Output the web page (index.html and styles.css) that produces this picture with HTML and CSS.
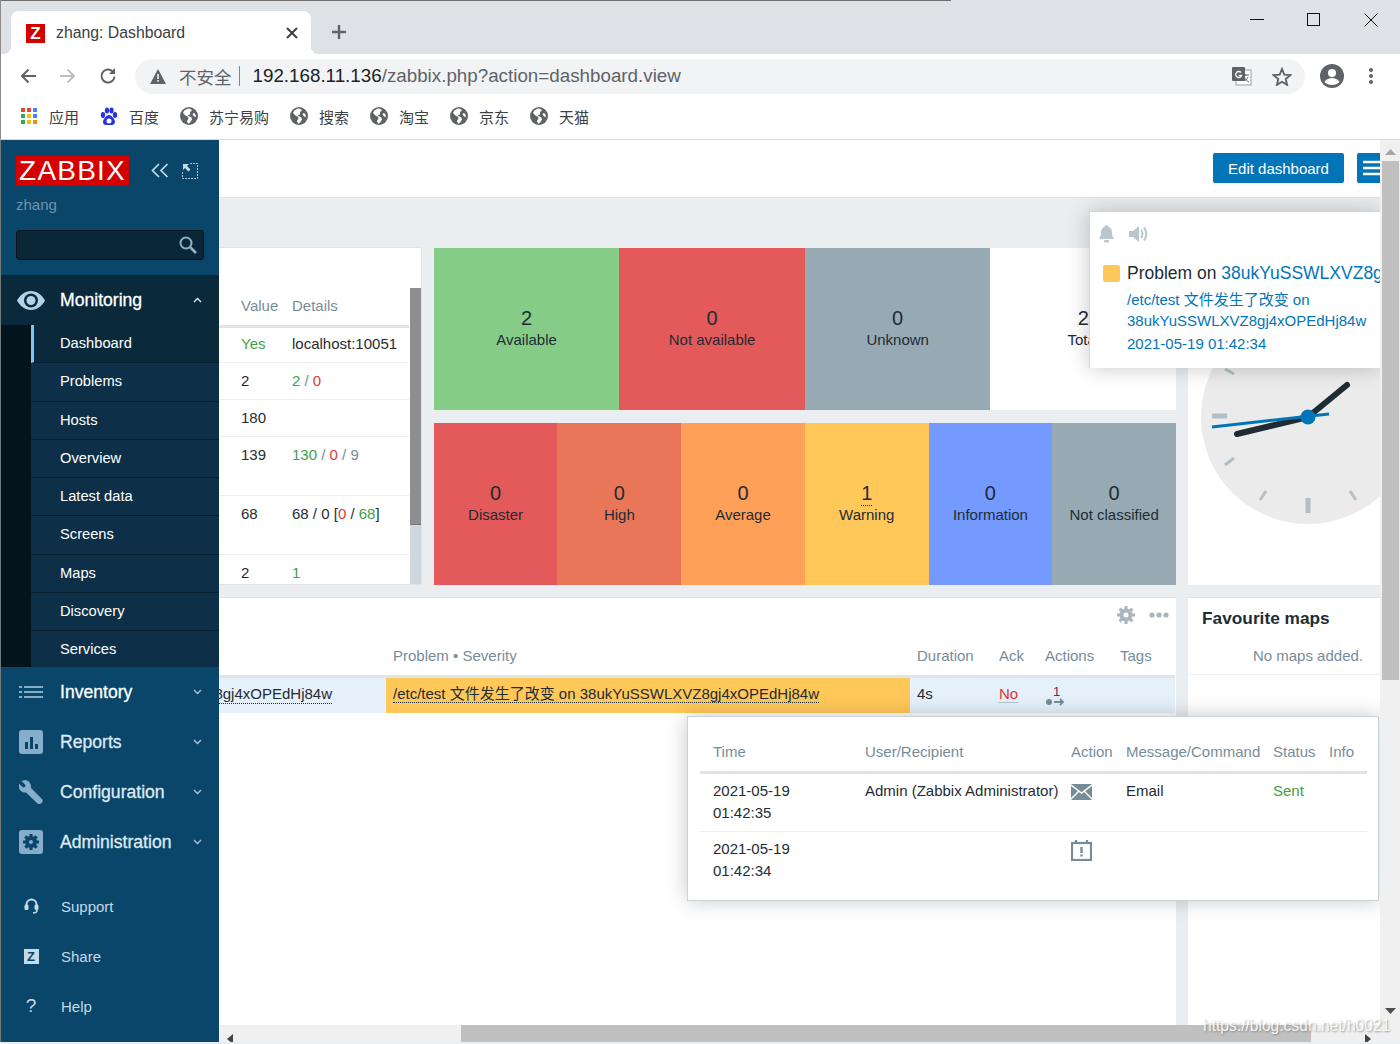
FILE: index.html
```html
<!DOCTYPE html>
<html lang="en">
  <head>
    <meta charset="UTF-8" />
    <meta name="viewport" content="width=device-width, initial-scale=1.0" />
    <title>zhang: Dashboard</title>
    <link rel="stylesheet" href="styles.css">
  </head>
  <body>
    <div class="frame">
      <!-- browser chrome -->
      <div class="tabstrip">
        <div class="tab">
          <span class="favicon">Z</span>
          <span class="tab-title">zhang: Dashboard</span>
          <svg class="tab-close" width="12" height="12" viewBox="0 0 12 12"><path d="M1 1l10 10M11 1L1 11" stroke="#3c4043" stroke-width="2"/></svg>
        </div>
        <svg class="tab-new" width="16" height="16" viewBox="0 0 16 16"><path d="M8 1v14M1 8h14" stroke="#5f6368" stroke-width="2.4"/></svg>
        <div class="win-controls">
          <svg width="14" height="14" viewBox="0 0 14 14"><path d="M0 6.500h14" stroke="#111" stroke-width="1"/></svg>
          <svg width="14" height="14" viewBox="0 0 14 14"><rect x=".5" y=".5" width="12" height="12" fill="none" stroke="#111"/></svg>
          <svg width="14" height="14" viewBox="0 0 14 14"><path d="M.5.5l13 13M13.500.5l-13 13" stroke="#111" stroke-width="1"/></svg>
        </div>
      </div>
      <div class="toolbar">
        <svg class="nav-icon" width="18" height="18" viewBox="0 0 18 18"><path d="M17 9H3M9.500 2.500L3 9l6.500 6.500" fill="none" stroke="#5f6368" stroke-width="2"/></svg>
        <svg class="nav-icon" width="18" height="18" viewBox="0 0 18 18"><path d="M1 9h14M8.500 2.500L15 9l-6.500 6.500" fill="none" stroke="#bcc0c4" stroke-width="2"/></svg>
        <svg class="nav-icon" width="18" height="18" viewBox="0 0 18 18"><path d="M15.500 9.500a6.500 6.500 0 1 1-2-5.200" fill="none" stroke="#5f6368" stroke-width="2"/><path d="M16 1v6h-6z" fill="#5f6368"/></svg>
        <div class="omnibox">
          <svg width="16" height="15" viewBox="0 0 16 15"><path d="M8 0l8 15H0z" fill="#5f6368"/><path d="M7.200 5h1.600v5H7.200zM7.200 11h1.600v1.800H7.200z" fill="#f1f3f4"/></svg>
          <span class="insecure">不安全</span>
          <span class="url-sep"></span>
          <span class="url"><span class="url-host">192.168.11.136</span>/zabbix.php?action=dashboard.view</span>
          <svg class="translate" width="20" height="20" viewBox="0 0 20 20"><rect x="4" y="4" width="15" height="15" fill="#fff" stroke="#9aa0a6"/><rect x="0" y="1" width="13" height="14" rx="1" fill="#5f6368"/><path d="M9 6.500a3 3 0 1 0 .6 3H6.800" fill="none" stroke="#fff" stroke-width="1.300"/><path d="M11 9h6M14 8v2M12 11c2 3 3 4 5 5M16 11c-1 2-2 3-3 4" fill="none" stroke="#5f6368"/></svg>
          <svg class="star" width="20" height="19" viewBox="0 0 20 19"><path d="M10 2l2.300 5.600 6 .5-4.600 3.900 1.400 5.900L10 14.800 4.900 17.900l1.400-5.900L1.700 8.100l6-.5z" fill="none" stroke="#5f6368" stroke-width="1.900"/></svg>
        </div>
        <svg class="avatar" width="24" height="24" viewBox="0 0 24 24"><circle cx="12" cy="12" r="12" fill="#5f6368"/><circle cx="12" cy="9" r="4" fill="#fff"/><path d="M4.500 18c1.500-3 5-4 7.500-4s6 1 7.500 4c-2 2-4.500 3-7.500 3s-5.500-1-7.500-3z" fill="#fff"/></svg>
        <svg class="kebab" width="4" height="18" viewBox="0 0 4 18"><circle cx="2" cy="3" r="2" fill="#5f6368"/><circle cx="2" cy="9" r="2" fill="#5f6368"/><circle cx="2" cy="15" r="2" fill="#5f6368"/></svg>
      </div>
      <div class="bookmarks">
        <div class="bookmark">
          <svg width="18" height="18" viewBox="0 0 18 18">
            <rect x="1" y="1" width="4" height="4" fill="#ea4335"/><rect x="7" y="1" width="4" height="4" fill="#ea4335"/><rect x="13" y="1" width="4" height="4" fill="#4285f4"/>
            <rect x="1" y="7" width="4" height="4" fill="#34a853"/><rect x="7" y="7" width="4" height="4" fill="#fbbc05"/><rect x="13" y="7" width="4" height="4" fill="#4285f4"/>
            <rect x="1" y="13" width="4" height="4" fill="#34a853"/><rect x="7" y="13" width="4" height="4" fill="#fbbc05"/><rect x="13" y="13" width="4" height="4" fill="#fb8c00"/>
          </svg>
          <span>应用</span>
        </div>
        <div class="bookmark">
          <svg width="18" height="18" viewBox="0 0 18 18" fill="#2932e1"><ellipse cx="3" cy="8" rx="2.200" ry="3"/><ellipse cx="7" cy="3.500" rx="2.100" ry="3"/><ellipse cx="11.500" cy="3.500" rx="2.100" ry="3"/><ellipse cx="15" cy="8" rx="2.200" ry="3"/><path d="M9 8c3 0 6 5 6 7s-2 3-3 3H6c-2 0-3-1-3-3s3-7 6-7z"/><circle cx="9" cy="14" r="2.500" fill="#fff"/></svg>
          <span>百度</span>
        </div>
        <div class="bookmark">
          <svg class="globe" width="18" height="18" viewBox="0 0 18 18"><use href="#globe"/></svg>
          <span>苏宁易购</span>
        </div>
        <div class="bookmark">
          <svg class="globe" width="18" height="18" viewBox="0 0 18 18"><use href="#globe"/></svg>
          <span>搜索</span>
        </div>
        <div class="bookmark">
          <svg class="globe" width="18" height="18" viewBox="0 0 18 18"><use href="#globe"/></svg>
          <span>淘宝</span>
        </div>
        <div class="bookmark">
          <svg class="globe" width="18" height="18" viewBox="0 0 18 18"><use href="#globe"/></svg>
          <span>京东</span>
        </div>
        <div class="bookmark">
          <svg class="globe" width="18" height="18" viewBox="0 0 18 18"><use href="#globe"/></svg>
          <span>天猫</span>
        </div>
      </div>

      <svg class="defs" width="0" height="0">
        <symbol id="globe" viewBox="0 0 18 18">
          <circle cx="9" cy="9" r="9" fill="#5f6368"/>
          <path d="M8 1.500c-1 1-3 1-4 2.500L3 6l3 3 2 .5.500 2L7 14l1 2.500c1 0 1.500-.5 2-1l2-3-.5-2-3-1.500-.5-1 2-.5V5l2-1.500C11 2 9.500 1.500 8 1.500zM14 6l-1.500 1 1.500 2.500 2 .5c0-1.500-.8-3-2-4z" fill="#fff"/>
        </symbol>
      </svg>

      <div class="app">
        <!-- zabbix sidebar -->
        <aside class="sidebar">
          <div class="side-top">
            <div class="logo-row">
              <span class="logo">ZABBIX</span>
              <svg width="18" height="15" viewBox="0 0 18 15"><path d="M8 1L1.500 7.500 8 14M16.500 1L10 7.500l6.500 6.500" fill="none" stroke="#c5d9e6" stroke-width="1.700"/></svg>
              <svg width="16" height="16" viewBox="0 0 16 16"><path d="M8 .5h7.500V15.500H.5V8" fill="none" stroke="#a9c4d6" stroke-width="1" stroke-dasharray="2 1"/><path d="M1 1h6L5 3l3.500 3.500-2 2L3 5 1 7z" fill="#c5d9e6"/></svg>
            </div>
            <div class="side-user">zhang</div>
            <div class="side-search">
              <svg width="18" height="18" viewBox="0 0 18 18"><circle cx="7" cy="7" r="5.500" fill="none" stroke="#8fb0c5" stroke-width="2"/><path d="M11 11l6 6" stroke="#8fb0c5" stroke-width="2.600"/></svg>
            </div>
          </div>
          <div class="menu-open">
            <div class="menu-item">
              <span class="menu-icon">
                <svg width="28" height="19" viewBox="0 0 28 19"><path d="M14 0c6 0 11 4 14 9.500C25 15 20 19 14 19S3 15 0 9.500C3 4 8 0 14 0z" fill="#b4d3e8"/><circle cx="14" cy="9.500" r="7" fill="#0a2a3c"/><circle cx="14" cy="9.500" r="4.500" fill="#b4d3e8"/></svg>
              </span>
              <span class="menu-label">Monitoring</span>
              <svg class="chevron" width="9" height="6" viewBox="0 0 9 6"><path d="M1 5l3.500-3.500L8 5" fill="none" stroke="#dfeaf2" stroke-width="1.400"/></svg>
            </div>
            <ul class="submenu">
              <li class="is-active">Dashboard</li>
              <li>Problems</li>
              <li>Hosts</li>
              <li>Overview</li>
              <li>Latest data</li>
              <li>Screens</li>
              <li>Maps</li>
              <li>Discovery</li>
              <li>Services</li>
            </ul>
          </div>
          <div class="menu-closed">
            <div class="menu-item">
              <span class="menu-icon">
                <svg width="24" height="14" viewBox="0 0 24 14" fill="#86aecb"><rect x="0" y="1" width="3" height="2"/><rect x="5" y="1" width="19" height="2"/><rect x="0" y="6" width="3" height="2"/><rect x="5" y="6" width="19" height="2"/><rect x="0" y="11" width="3" height="2"/><rect x="5" y="11" width="19" height="2"/></svg>
              </span>
              <span class="menu-label">Inventory</span>
              <svg class="chevron" width="9" height="6" viewBox="0 0 9 6"><path d="M1 1l3.500 3.500L8 1" fill="none" stroke="#a9c4d6" stroke-width="1.400"/></svg>
            </div>
            <div class="menu-item">
              <span class="menu-icon">
                <svg width="24" height="24" viewBox="0 0 24 24"><rect width="24" height="24" rx="3" fill="#86aecb"/><path d="M6 12h3v7H6zM11 7h3v12h-3zM16 14h3v5h-3z" fill="#0a466a"/></svg>
              </span>
              <span class="menu-label">Reports</span>
              <svg class="chevron" width="9" height="6" viewBox="0 0 9 6"><path d="M1 1l3.500 3.500L8 1" fill="none" stroke="#a9c4d6" stroke-width="1.400"/></svg>
            </div>
            <div class="menu-item">
              <span class="menu-icon">
                <svg width="24" height="24" viewBox="0 0 24 24"><path d="M6 0L2.500 1l4 4-.5 2-2 .5-4-4L0 7c0 3 3 6 7 5.500L18.500 23.500c1 1 2.500 1 3.500 0l1-1c1-1 1-2.500 0-3.500L12 8C12.500 3.500 9.500 0 6 0z" fill="#86aecb"/></svg>
              </span>
              <span class="menu-label">Configuration</span>
              <svg class="chevron" width="9" height="6" viewBox="0 0 9 6"><path d="M1 1l3.500 3.500L8 1" fill="none" stroke="#a9c4d6" stroke-width="1.400"/></svg>
            </div>
            <div class="menu-item">
              <span class="menu-icon">
                <svg width="24" height="24" viewBox="0 0 24 24"><rect width="24" height="24" rx="3" fill="#86aecb"/><circle cx="12" cy="12" r="4" fill="none" stroke="#0a466a" stroke-width="4"/><path d="M12 4v3M12 17v3M4 12h3M17 12h3M6.300 6.300l2.200 2.200M15.500 15.500l2.200 2.200M17.700 6.300l-2.200 2.200M8.500 15.500l-2.200 2.200" stroke="#0a466a" stroke-width="3.200"/></svg>
              </span>
              <span class="menu-label">Administration</span>
              <svg class="chevron" width="9" height="6" viewBox="0 0 9 6"><path d="M1 1l3.500 3.500L8 1" fill="none" stroke="#a9c4d6" stroke-width="1.400"/></svg>
            </div>
          </div>
          <div class="side-links">
            <div class="side-link">
              <span class="link-icon">
                <svg width="15" height="16" viewBox="0 0 15 16"><path d="M2.500 8V6.500a5 5 0 0 1 10 0V8" fill="none" stroke="#c5d9e6" stroke-width="2"/><rect x="0.500" y="6.500" width="4" height="5.500" rx="1.500" fill="#c5d9e6"/><rect x="10.500" y="6.500" width="4" height="5.500" rx="1.500" fill="#c5d9e6"/><path d="M13 12c0 2-2 3-4 3" fill="none" stroke="#c5d9e6" stroke-width="1.500"/></svg>
              </span>
              <span>Support</span>
            </div>
            <div class="side-link">
              <span class="link-icon">
                <span class="share-z">Z</span>
              </span>
              <span>Share</span>
            </div>
            <div class="side-link">
              <span class="link-icon help-q">?</span>
              <span>Help</span>
            </div>
          </div>
        </aside>

        <div class="view">
          <main class="page">
            <header class="page-head">
              <button class="btn-edit">Edit dashboard</button>
              <button class="btn-menu">
                <svg width="24" height="16" viewBox="0 0 24 16"><path d="M0 2h24M0 8h24M0 14h24" stroke="#fff" stroke-width="2.400"/></svg>
              </button>
            </header>

            <div class="dashboard">
              <!-- system information -->
              <section class="widget sys-widget">
                <div class="sys-body">
                  <table class="sys-table">
                    <thead>
                      <tr><th>Value</th><th>Details</th></tr>
                    </thead>
                    <tbody>
                      <tr class="first"><td class="green">Yes</td><td>localhost:10051</td></tr>
                      <tr><td>2</td><td><span class="green">2</span> <span class="grey">/</span> <span class="red">0</span></td></tr>
                      <tr><td>180</td><td></td></tr>
                      <tr class="tall"><td>139</td><td><span class="green">130</span> <span class="grey">/</span> <span class="red">0</span> <span class="grey">/ 9</span></td></tr>
                      <tr class="tall"><td>68</td><td>68 / 0 [<span class="red">0</span> / <span class="green">68</span>]</td></tr>
                      <tr><td>2</td><td><span class="green">1</span></td></tr>
                    </tbody>
                  </table>
                  <div class="sys-scroll"><div class="sys-thumb"></div></div>
                </div>
              </section>

              <!-- host availability and problems by severity -->
              <section class="tiles-col">
                <div class="tiles tiles-hosts">
                  <div class="tile tile-green"><b>2</b><span>Available</span></div>
                  <div class="tile tile-red"><b>0</b><span>Not available</span></div>
                  <div class="tile tile-grey"><b>0</b><span>Unknown</span></div>
                  <div class="tile tile-white"><b>2</b><span>Total</span></div>
                </div>
                <div class="tiles tiles-severity">
                  <div class="tile tile-red"><b>0</b><span>Disaster</span></div>
                  <div class="tile tile-high"><b>0</b><span>High</span></div>
                  <div class="tile tile-average"><b>0</b><span>Average</span></div>
                  <div class="tile tile-warning"><b class="dotted">1</b><span>Warning</span></div>
                  <div class="tile tile-info"><b>0</b><span>Information</span></div>
                  <div class="tile tile-grey"><b>0</b><span>Not classified</span></div>
                </div>
              </section>

              <!-- clock -->
              <section class="widget clock-widget">
                <svg width="214" height="214" viewBox="0 0 214 214">
                  <circle cx="107" cy="107" r="107" fill="#ebebeb"/>
                  <g stroke="#b1bfc6">
                    <path d="M11 106h15" stroke-width="5"/>
                    <path d="M107 188v15" stroke-width="5"/>
                    <path d="M24 59l9 5M24 155l9-7M59 190l6-9M149 181l6 9" stroke-width="3"/>
                  </g>
                  <path d="M36 124L107 107L146 75" fill="none" stroke="#1f2c33" stroke-width="6" stroke-linecap="round" stroke-linejoin="round"/>
                  <path d="M11 117L128 104" stroke="#0275b8" stroke-width="3"/>
                  <circle cx="107" cy="107" r="7.500" fill="#0275b8"/>
                </svg>
              </section>

              <!-- problems -->
              <section class="widget problems-widget">
                <div class="widget-tools">
                  <svg width="18" height="18" viewBox="0 0 18 18"><circle cx="9" cy="9" r="4.500" fill="none" stroke="#a8b6be" stroke-width="4"/><path d="M9 0v4M9 14v4M0 9h4M14 9h4M2.600 2.600l3 3M12.400 12.400l3 3M15.400 2.600l-3 3M5.600 12.400l-3 3" stroke="#a8b6be" stroke-width="3"/></svg>
                  <svg width="20" height="6" viewBox="0 0 20 6" fill="#a8b6be"><circle cx="3" cy="3" r="2.600"/><circle cx="10" cy="3" r="2.600"/><circle cx="17" cy="3" r="2.600"/></svg>
                </div>
                <table class="problems-table">
                  <colgroup>
                    <col class="col-host"><col class="col-problem"><col class="col-duration"><col class="col-ack"><col class="col-actions"><col class="col-tags">
                  </colgroup>
                  <thead>
                    <tr><th></th><th>Problem • Severity</th><th>Duration</th><th>Ack</th><th>Actions</th><th>Tags</th></tr>
                  </thead>
                  <tbody>
                    <tr class="row-problem">
                      <td class="host-cell"><div class="host-name"><span>8gj4xOPEdHj84w</span></div></td>
                      <td class="problem-cell"><span class="dotted">/etc/test 文件发生了改变 on 38ukYuSSWLXVZ8gj4xOPEdHj84w</span></td>
                      <td>4s</td>
                      <td><span class="red ack-no">No</span></td>
                      <td>
                        <div class="action-mark">
                          <sup>1</sup>
                          <svg width="20" height="8" viewBox="0 0 20 8"><circle cx="4" cy="4" r="3" fill="#768d99"/><path d="M9 4h9M15 1l3 3-3 3" fill="none" stroke="#768d99" stroke-width="1.800"/></svg>
                        </div>
                      </td>
                      <td></td>
                    </tr>
                  </tbody>
                </table>
              </section>

              <!-- favourite maps -->
              <section class="widget maps-widget">
                <h3 class="maps-title">Favourite maps</h3>
                <div class="maps-empty">No maps added.</div>
              </section>
            </div>
          </main>

          <!-- problem notification -->
          <div class="notice">
            <div class="notice-tools">
              <svg width="15" height="18" viewBox="0 0 15 18" fill="#b9c6cd"><path d="M7.500 0c1 0 1.500.7 1.500 1.500C12 2.500 13 5 13 8c0 3 1 4.500 2 6H0c1-1.500 2-3 2-6 0-3 1-5.500 4-6.500C6 .7 6.500 0 7.500 0z"/><rect x="5" y="15" width="5" height="2.500" rx="1.200"/></svg>
              <svg width="19" height="18" viewBox="0 0 19 18" fill="none"><path d="M0 6h4l6-5v16l-6-5H0z" fill="#b9c6cd"/><path d="M12 5c2 2 2 6 0 8M15 2.500c3 3.500 3 9.500 0 13" stroke="#b9c6cd" stroke-width="2"/></svg>
            </div>
            <div class="notice-head">
              <span class="notice-swatch"></span>
              <span class="notice-title">Problem on <a>38ukYuSSWLXVZ8gj4xOPEdHj84w</a></span>
            </div>
            <div class="notice-lines">
              <div>/etc/test 文件发生了改变 on</div>
              <div>38ukYuSSWLXVZ8gj4xOPEdHj84w</div>
              <div class="notice-time">2021-05-19 01:42:34</div>
            </div>
          </div>

          <!-- actions hint box -->
          <div class="hintbox">
            <table class="hint-table">
              <colgroup>
                <col class="hc-time"><col class="hc-user"><col class="hc-action"><col class="hc-msg"><col class="hc-status"><col class="hc-info">
              </colgroup>
              <thead>
                <tr><th>Time</th><th>User/Recipient</th><th>Action</th><th>Message/Command</th><th>Status</th><th>Info</th></tr>
              </thead>
              <tbody>
                <tr>
                  <td>2021-05-19<br>01:42:35</td>
                  <td>Admin (Zabbix Administrator)</td>
                  <td>
                    <svg class="hint-mail" width="21" height="16" viewBox="0 0 21 16"><rect width="21" height="16" rx="1" fill="#768d99"/><path d="M0 1l10.500 8L21 1M0 15l8-8M21 15l-8-8" fill="none" stroke="#fff" stroke-width="1.500"/></svg>
                  </td>
                  <td>Email</td>
                  <td class="green">Sent</td>
                  <td></td>
                </tr>
                <tr>
                  <td>2021-05-19<br>01:42:34</td>
                  <td></td>
                  <td>
                    <svg class="hint-cal" width="21" height="21" viewBox="0 0 21 21"><rect x="1" y="3" width="19" height="17" fill="none" stroke="#768d99" stroke-width="2.200"/><path d="M5 0v3M16 0v3" stroke="#768d99" stroke-width="2.200"/><path d="M10.500 7v6M10.500 14.500v2" stroke="#768d99" stroke-width="2.400"/></svg>
                  </td>
                  <td></td>
                  <td></td>
                  <td></td>
                </tr>
              </tbody>
            </table>
          </div>

          <div class="hscroll">
            <div class="hscroll-left"><svg width="6" height="10" viewBox="0 0 6 10"><path d="M6 0v10L0 5z" fill="#444"/></svg></div>
            <div class="hscroll-thumb"></div>
            <div class="hscroll-right"><svg width="6" height="10" viewBox="0 0 6 10"><path d="M0 0v10l6-5z" fill="#444"/></svg></div>
          </div>
        </div>

        <div class="vscroll">
          <svg width="11" height="6" viewBox="0 0 11 6"><path d="M5.500 0L11 6H0z" fill="#a6a6a6"/></svg>
          <div class="vscroll-thumb"></div>
          <svg width="11" height="6" viewBox="0 0 11 6"><path d="M5.500 6L11 0H0z" fill="#505050"/></svg>
        </div>
      </div>
      <div class="bottom-strip"></div>
      <div class="watermark">https://blog.csdn.net/h0021</div>
    </div>
  </body>
</html>
```

FILE: styles.css
```css
* {
  box-sizing: border-box;
}

body {
  margin: 0;
  font-family: "Liberation Sans", "Noto Sans CJK SC", sans-serif;
  font-size: 15px;
  color: #1f2c33;
  background: #fff;
}

.frame {
  position: relative;
  width: 1400px;
  height: 1044px;
  overflow: hidden;
}

.defs {
  position: absolute;
}

/* browser chrome */
.tabstrip {
  position: relative;
  height: 54px;
  padding: 11px 0 0 11px;
  display: flex;
  align-items: flex-start;
  background: #dee1e6;
  border-left: 1px solid #8a8a8a;
}

.tabstrip::before {
  content: "";
  position: absolute;
  top: 0;
  left: 0;
  width: 950px;
  height: 1px;
  background: #6e6e6e;
}

.tab {
  position: relative;
  width: 300px;
  height: 43px;
  margin-left: -1px;
  padding: 1px 13px 0 15px;
  display: flex;
  align-items: center;
  background: #fff;
  border-radius: 8px 8px 0 0;
}

.tab::before,
.tab::after {
  content: "";
  position: absolute;
  bottom: 0;
  width: 8px;
  height: 8px;
}

.tab::before {
  left: -8px;
  background: radial-gradient(circle at 0 0, transparent 8px, #fff 8.500px);
}

.tab::after {
  right: -8px;
  background: radial-gradient(circle at 100% 0, transparent 8px, #fff 8.500px);
}

.favicon {
  width: 19px;
  height: 19px;
  margin-right: 11px;
  background: #d40000;
  color: #fff;
  font-size: 17px;
  font-weight: bold;
  line-height: 19px;
  text-align: center;
}

.tab-title {
  flex: 1;
  font-size: 15.800px;
  color: #3c4043;
}

.tab-new {
  margin: 13px 0 0 20px;
}

.win-controls {
  margin-left: auto;
  padding: 2px 22px 0 0;
  display: flex;
  gap: 43px;
}

.toolbar {
  height: 45px;
  padding: 0 19px 0 18px;
  display: flex;
  align-items: center;
  border-left: 1px solid #8a8a8a;
  background: #fff;
}

.nav-icon {
  margin: 0 22px 1px 0;
}

.omnibox {
  width: 1170px;
  height: 35px;
  margin: 0 15px 0 -4px;
  padding: 0 13px 1px 15px;
  display: flex;
  align-items: center;
  background: #f1f3f4;
  border-radius: 18px;
}

.insecure {
  margin-left: 13px;
  font-size: 17.500px;
  color: #5f6368;
}

.url-sep {
  width: 1px;
  height: 20px;
  margin: 0 13px 0 7px;
  background: #80868b;
}

.url {
  flex: 1;
  font-size: 18.800px;
  color: #5f6368;
  white-space: nowrap;
}

.url-host {
  color: #202124;
}

.translate {
  margin-right: 20px;
}

.avatar {
  margin: 0 25px 1px 0;
}

.kebab {
  margin-bottom: 1px;
}

.bookmarks {
  height: 41px;
  padding: 0 0 6px 19px;
  display: flex;
  align-items: center;
  gap: 21px;
  border-left: 1px solid #8a8a8a;
  border-bottom: 1px solid #d6d8da;
  background: #fff;
}

.bookmark {
  display: flex;
  align-items: center;
  gap: 11px;
  font-size: 15px;
  color: #3c4043;
}

/* app */
.app {
  height: 902px;
  display: flex;
}

.sidebar {
  width: 219px;
  flex: none;
  display: flex;
  flex-direction: column;
  background: #0a466a;
  border-left: 1px solid #6f7a80;
  overflow: hidden;
}

.side-top {
  height: 135px;
  padding: 16px 15px 0;
}

.logo-row {
  display: flex;
  align-items: center;
}

.logo {
  width: 113px;
  height: 30px;
  margin-right: 22px;
  background: #d40000;
  color: #fff;
  font-size: 28px;
  line-height: 29px;
  text-align: center;
  letter-spacing: 1.200px;
}

.logo-row svg {
  margin-bottom: 1px;
}

.logo-row svg:last-child {
  margin-left: 13px;
}

.side-user {
  margin-top: 9px;
  color: #6f93ab;
  line-height: 20px;
}

.side-search {
  height: 30px;
  margin-top: 15px;
  padding: 5px 6px 0 0;
  display: flex;
  justify-content: flex-end;
  background: #0a2738;
  border: 1px solid #04141d;
  border-radius: 3px;
}

.menu-open {
  height: 392px;
  background: #0a2a3c;
  overflow: hidden;
}

.menu-item {
  height: 50px;
  padding-left: 16px;
  display: flex;
  align-items: center;
  color: #dfeaf2;
}

.menu-icon {
  width: 28px;
  margin-right: 15px;
  display: flex;
  justify-content: center;
}

.menu-label {
  flex: 1;
  font-size: 17.600px;
  -webkit-text-stroke: .3px currentColor;
}

.menu-item:first-child .menu-label {
  color: #fff;
}

.chevron {
  margin-right: 17px;
}

.submenu {
  margin: 0;
  padding: 0 0 0 30px;
  list-style: none;
  background: #04141d;
}

.submenu li {
  height: 38.250px;
  padding-left: 29px;
  line-height: 37px;
  font-size: 14.700px;
  color: #fff;
  background: #0d3048;
  border-bottom: 1px solid #06202f;
}

.submenu .is-active {
  padding-left: 26px;
  background: #0a2a3c;
  border-left: 3px solid #80c6f2;
}

.side-links {
  margin-top: 14px;
}

.side-link {
  height: 50px;
  padding-left: 15px;
  display: flex;
  align-items: center;
  color: #c5d9e6;
}

.link-icon {
  width: 30px;
  margin-right: 15px;
  display: flex;
  justify-content: center;
}

.share-z {
  width: 15px;
  height: 15px;
  background: #c5d9e6;
  color: #0a466a;
  font-size: 13px;
  font-weight: bold;
  line-height: 15px;
  text-align: center;
}

.help-q {
  font-size: 19px;
}

/* main view */
.view {
  position: relative;
  flex: 1;
  min-width: 0;
  display: flex;
  flex-direction: column;
  overflow: hidden;
}

.page {
  flex: 1;
  min-height: 0;
  display: flex;
  flex-direction: column;
  background: #ebeef0;
}

.page-head {
  height: 58px;
  padding-top: 13px;
  display: flex;
  gap: 13px;
  justify-content: flex-end;
  margin-right: -23px;
  background: #fff;
  border-bottom: 1px solid #dfe4e7;
}

.btn-edit,
.btn-menu {
  height: 30px;
  border: 0;
  border-radius: 2px;
  background: #0275b8;
  color: #fff;
  font-family: inherit;
  font-size: 15px;
}

.btn-edit {
  width: 131px;
}

.btn-menu {
  width: 46px;
  padding: 0 0 0 6px;
  text-align: left;
}

.btn-menu svg {
  display: block;
}

.dashboard {
  flex: 1;
  min-height: 0;
  padding-top: 49px;
  display: grid;
  grid-template-columns: 203px 742px 192px;
  grid-template-rows: 338px 1fr;
  column-gap: 12px;
  row-gap: 12px;
}

.widget {
  background: #fff;
  overflow: hidden;
}

table {
  border-collapse: collapse;
  table-layout: fixed;
}

th {
  padding: 0;
  font-weight: normal;
  text-align: left;
  color: #768d99;
}

td {
  padding: 0;
  vertical-align: top;
}

.green {
  color: #429e47;
}

.red {
  color: #e33734;
}

.grey {
  color: #768d99;
}

/* system information */
.sys-widget {
  padding-top: 40px;
  border: 1px solid #dfe4e7;
  border-left: 0;
}

.sys-body {
  height: 297px;
  display: flex;
  overflow: hidden;
}

.sys-table {
  width: 190px;
  flex: none;
  align-self: flex-start;
}

.sys-table th {
  height: 38px;
  padding: 0 0 1px 22px;
  border-bottom: 3px solid #dfe4e7;
}

.sys-table th:last-child,
.sys-table td:last-child {
  width: 117px;
  padding-left: 0;
}

.sys-table td {
  height: 37px;
  padding-top: 9px;
  padding-left: 22px;
  border-bottom: 1px solid #ebeef0;
  white-space: nowrap;
}

.sys-table .first td {
  height: 36px;
  padding-top: 7px;
}

.sys-table .tall td {
  height: 59px;
}

.sys-scroll {
  width: 11px;
  margin-left: 1px;
  background: #d0d8df;
}

.sys-thumb {
  height: 237px;
  background: #8e8e90;
  border-bottom: 1px solid #777;
}

/* status tiles */
.tiles-col {
  padding-top: 1px;
  display: flex;
  flex-direction: column;
  gap: 13px;
}

.tiles {
  height: 162px;
  margin-left: -.25px;
  display: flex;
  background: #fff;
}

.tile {
  flex: 1;
  padding-bottom: 4px;
  display: flex;
  flex-direction: column;
  align-items: center;
  justify-content: center;
  line-height: 18px;
}

.tile b {
  font-size: 20px;
  font-weight: normal;
  line-height: 25px;
}

.tile-green {
  background: #86cc89;
}

.tile-red {
  background: #e45959;
}

.tile-grey {
  background: #97aab3;
}

.tile-white {
  background: #fff;
}

.tile-high {
  background: #e97659;
}

.tile-average {
  background: #ffa059;
}

.tile-warning {
  background: #ffc859;
}

.tile-info {
  background: #7499ff;
}

.tile-warning .dotted {
  line-height: 24px;
}

.dotted {
  border-bottom: 1px dotted #1f2c33;
}

/* clock */
.clock-widget {
  padding: 63px 0 0 13px;
}

.clock-widget svg {
  display: block;
}

/* problems */
.problems-widget {
  grid-column: 1 / 3;
  border-top: 1px solid #dfe4e7;
  width: 957px;
}

.widget-tools {
  height: 38px;
  padding: 0 7px 4px 0;
  display: flex;
  justify-content: flex-end;
  align-items: center;
  gap: 14px;
}

.problems-table {
  width: 956px;
}

.col-host {
  width: 167px;
}

.col-problem {
  width: 524px;
}

.col-duration {
  width: 82px;
}

.col-ack {
  width: 46px;
}

.col-actions {
  width: 75px;
}

.col-tags {
  width: 62px;
}

.problems-table th {
  height: 40px;
  padding: 1px 0 0 7px;
  border-bottom: 3px solid #dfe4e7;
}

.problems-table td {
  height: 37px;
  padding: 7px 0 0 7px;
  line-height: 18px;
  white-space: nowrap;
}

.row-problem td {
  background: #e5f0fa;
}

.problems-table .host-cell {
  padding-left: 0;
}

.host-name {
  padding-right: 54px;
  display: flex;
  justify-content: flex-end;
  overflow: hidden;
}

.host-name span {
  flex: none;
  border-bottom: 1px dotted #1f2c33;
}

.row-problem .problem-cell {
  background: #ffc859;
}

.ack-no {
  border-bottom: 1px solid #b9c6cd;
}

.action-mark {
  position: relative;
  padding-top: 13px;
}

.action-mark sup {
  position: absolute;
  top: 1px;
  left: 8px;
  font-size: 13px;
  line-height: 12px;
  color: #7a1f5c;
}

.action-mark svg {
  display: block;
}

/* favourite maps */
.maps-widget {
  border-top: 1px solid #dfe4e7;
}

.maps-title {
  margin: 0;
  padding: 9px 0 0 14px;
  font-size: 17.300px;
  line-height: 22px;
  color: #1f2c33;
}

.maps-empty {
  height: 46px;
  padding: 18px 17px 0 0;
  text-align: right;
  color: #768d99;
  border-bottom: 1px solid #ebeef0;
}

/* overlays */
.notice {
  position: absolute;
  top: 71px;
  left: 870px;
  width: 291px;
  height: 157px;
  padding: 13px 0 0 13px;
  overflow: hidden;
  background: #fff;
  border-top: 1px solid #d0d8df;
  border-left: 1px solid #d0d8df;
  box-shadow: 0 0 20px rgba(0, 0, 0, .22);
}

.notice-tools {
  display: flex;
  gap: 15px;
  height: 18px;
  margin-left: -4px;
}

.notice-head {
  margin-top: 18px;
  display: flex;
  align-items: center;
  gap: 6px;
  white-space: nowrap;
}

.notice-swatch {
  width: 17px;
  height: 17px;
  flex: none;
  margin-right: 1px;
  background: #ffc859;
  border-radius: 2px;
}

.notice-title {
  font-size: 17.500px;
  line-height: 24px;
}

.notice-title a {
  color: #0275b8;
}

.notice-lines {
  margin: 4px 0 0 24px;
  color: #0275b8;
  line-height: 21px;
  white-space: nowrap;
}

.notice-time {
  margin-top: 2px;
}

.hintbox {
  position: absolute;
  top: 576px;
  left: 468px;
  width: 692px;
  height: 185px;
  padding: 25px 12px 0;
  background: #fff;
  border: 1px solid #c9d3d9;
  box-shadow: 0 0 20px rgba(0, 0, 0, .22);
}

.hint-table {
  width: 667px;
}

.hc-time {
  width: 152px;
}

.hc-user {
  width: 206px;
}

.hc-action {
  width: 55px;
}

.hc-msg {
  width: 147px;
}

.hc-status {
  width: 56px;
}

.hc-info {
  width: 51px;
}

.hint-table th {
  height: 30px;
  padding: 0 0 9px 13px;
  border-bottom: 3px solid #dfe4e7;
  white-space: nowrap;
}

.hint-table td {
  padding: 6px 0 6px 13px;
  line-height: 22.500px;
  border-bottom: 1px solid #ebeef0;
  white-space: nowrap;
}

.hint-table tr:last-child td {
  border-bottom: 0;
}

.hint-mail {
  display: block;
  margin-top: 4px;
}

.hint-cal {
  display: block;
  margin-top: 2px;
}

/* scrollbars */
.hscroll {
  height: 17px;
  flex: none;
  display: flex;
  background: #f0f0f0;
}

.hscroll-left {
  width: 242px;
  padding: 5px 0 0 8px;
}

.hscroll-thumb {
  width: 850px;
  background: #c0c0c0;
}

.hscroll-right {
  flex: 1;
  padding: 5px 0 0 54px;
}

.vscroll {
  width: 20px;
  flex: none;
  padding: 9px 1px 28px;
  display: flex;
  flex-direction: column;
  align-items: center;
  background: #f0f0f0;
}

.vscroll-thumb {
  width: 17px;
  height: 519px;
  margin: 6px 0 auto;
  background: #c0c0c0;
}

.bottom-strip {
  height: 2px;
  background: #e8eef2;
}

.watermark {
  position: absolute;
  left: 1203px;
  top: 1017px;
  font-size: 15.600px;
  color: rgba(255, 255, 255, .9);
  text-shadow: 1px 1px 2px rgba(100, 100, 100, .6);
  white-space: nowrap;
}
```
